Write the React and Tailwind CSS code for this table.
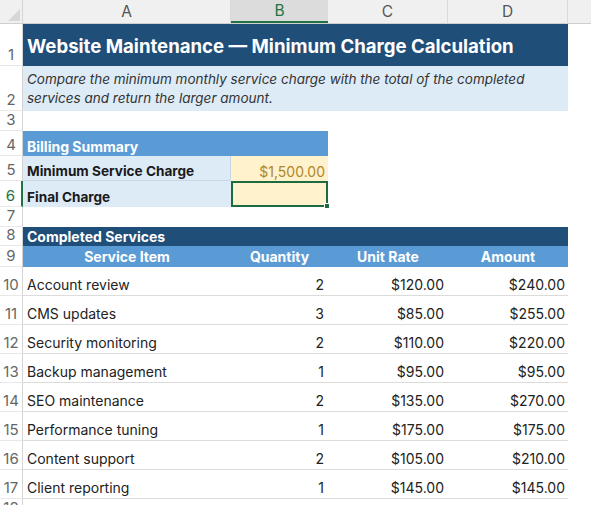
import React from "react";

const services = [
  ["Account review", 2, "$120.00", "$240.00"],
  ["CMS updates", 3, "$85.00", "$255.00"],
  ["Security monitoring", 2, "$110.00", "$220.00"],
  ["Backup management", 1, "$95.00", "$95.00"],
  ["SEO maintenance", 2, "$135.00", "$270.00"],
  ["Performance tuning", 1, "$175.00", "$175.00"],
  ["Content support", 2, "$105.00", "$210.00"],
  ["Client reporting", 1, "$145.00", "$145.00"],
];

function RowNum({ n, active }) {
  return (
    <div
      className={
        "w-[23px] shrink-0 flex items-end justify-center leading-[18px] text-[15px] pb-[1px] border-b border-[#e8e8e8] bg-white " +
        (active ? "text-[#217346] border-r-2 border-r-[#217346]" : "text-[#666] border-r border-r-[#d4d4d4]")
      }
    >
      {n}
    </div>
  );
}

export default function App() {
  return (
    <div
      className="w-[591px] h-[505px] overflow-hidden bg-white text-[14px] leading-[18px] text-[#222]"
      style={{ fontFamily: "Inter, 'Noto Sans', sans-serif" }}
    >
      {/* column headers */}
      <div className="flex h-[24px] bg-[#f0f0f0] border-b border-[#cfcfcf] text-[#555] text-[15.5px]">
        <div className="w-[23px] shrink-0 relative border-r border-[#d4d4d4]">
          <div className="absolute right-[2px] bottom-[2px] w-0 h-0 border-l-[12px] border-l-transparent border-b-[12px] border-b-[#d6d6d6]" />
        </div>
        <div className="w-[208px] flex items-center justify-center border-r border-[#dadada]">A</div>
        <div className="w-[97px] flex items-center justify-center bg-[#dcdcdc] text-[#217346] border-b-2 border-[#217346]">B</div>
        <div className="w-[120px] flex items-center justify-center border-r border-[#dadada]">C</div>
        <div className="w-[120px] flex items-center justify-center border-r border-[#dadada]">D</div>
        <div className="flex-1" />
      </div>

      {/* row 1 */}
      <div className="flex h-[42px]">
        <RowNum n={1} />
        <div className="w-[545px] bg-[#1f4e79] text-white font-bold text-[18.6px] flex items-center pl-[4px] pt-[2px]">
          Website Maintenance — Minimum Charge Calculation
        </div>
      </div>

      {/* row 2 */}
      <div className="flex h-[45px]">
        <RowNum n={2} />
        <div className="w-[545px] bg-[#ddebf7] italic text-[#333] text-[13.5px] leading-[19px] flex items-end pl-[4px] pr-[20px] pb-[3px]">
          Compare the minimum monthly service charge with the total of the completed services and return the larger amount.
        </div>
      </div>

      <div className="flex h-[20px]">
        <RowNum n={3} />
      </div>

      {/* billing summary */}
      <div className="flex h-[25px]">
        <RowNum n={4} />
        <div className="w-[305px] bg-[#5b9bd5] text-white font-bold flex items-end pl-[4px]">Billing Summary</div>
      </div>
      <div className="flex h-[25px]">
        <RowNum n={5} />
        <div className="w-[208px] bg-[#ddebf7] font-bold text-[13.6px] text-[#1a1a1a] flex items-end pl-[4px] border-b border-r border-[#c9d6e3]">
          Minimum Service Charge
        </div>
        <div className="w-[97px] bg-[#fff2cc] text-[#b0862a] flex items-end justify-end pr-[3px]">$1,500.00</div>
      </div>
      <div className="flex h-[26px]">
        <RowNum n={6} active />
        <div className="w-[208px] bg-[#ddebf7] font-bold text-[13.6px] text-[#1a1a1a] flex items-end pl-[4px] pb-[1px]">Final Charge</div>
        <div className="w-[97px] bg-[#fff2cc] border-2 border-[#1e6b40] relative">
          <div className="absolute right-[-4px] bottom-[-4px] w-[6px] h-[6px] bg-[#1e6b40] border border-white" />
        </div>
      </div>

      <div className="flex h-[20px]">
        <RowNum n={7} />
      </div>

      {/* completed services */}
      <div className="flex h-[19px]">
        <RowNum n={8} />
        <div className="w-[545px] bg-[#1f4e79] text-white font-bold flex items-center pl-[4px]">Completed Services</div>
      </div>
      <div className="flex h-[21px]">
        <RowNum n={9} />
        <div className="w-[545px] bg-[#5b9bd5] text-white font-bold flex items-center">
          <div className="w-[208px] text-center">Service Item</div>
          <div className="w-[97px] text-center">Quantity</div>
          <div className="w-[120px] text-center">Unit Rate</div>
          <div className="w-[120px] text-center">Amount</div>
        </div>
      </div>

      {services.map((s, i) => (
        <div key={s[0]} className="flex h-[29px]">
          <RowNum n={10 + i} />
          <div className="w-[545px] flex items-end pb-[1px] border-b border-[#dcdcdc]">
            <div className="w-[208px] pl-[4px]">{s[0]}</div>
            <div className="w-[97px] text-right pr-[4px]">{s[1]}</div>
            <div className="w-[120px] text-right pr-[4px]">{s[2]}</div>
            <div className="w-[120px] text-right pr-[3px]">{s[3]}</div>
          </div>
        </div>
      ))}
      <div className="flex h-[20px]">
        <RowNum n={18} />
      </div>
    </div>
  );
}
